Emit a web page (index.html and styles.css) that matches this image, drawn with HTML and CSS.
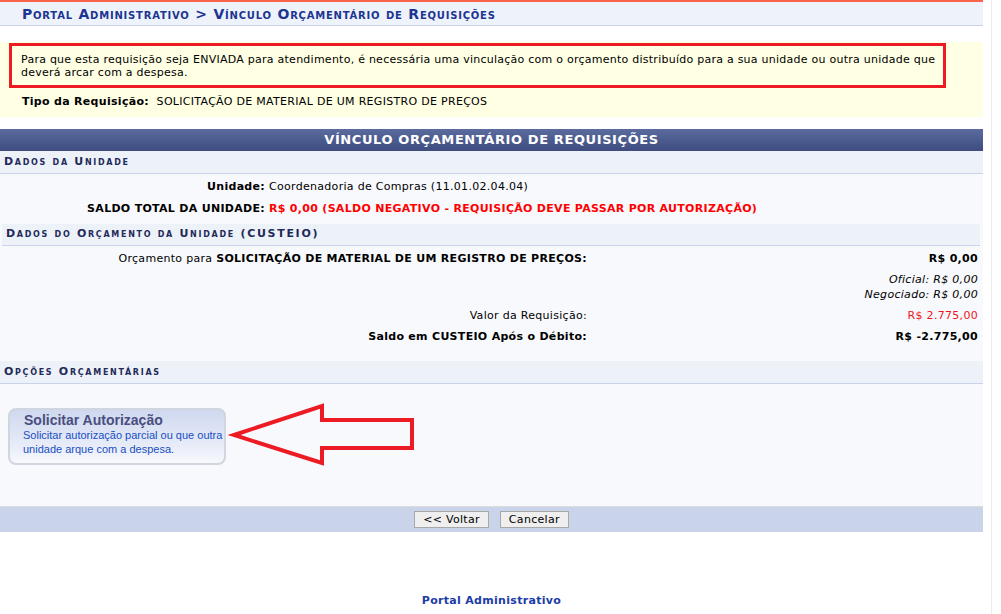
FILE: index.html
```html
<!DOCTYPE html>
<html lang="pt-BR">
<head>
    <meta charset="UTF-8">
    <title>Vínculo Orçamentário de Requisições</title>
    <link rel="stylesheet" href="styles.css">
</head>
<body>
    <div class="page">
        <div class="top-line"></div>
        <h2 class="breadcrumb">Portal Administrativo &gt; Vínculo Orçamentário de Requisições</h2>

        <div class="info-box">
            <div class="alert">
                Para que esta requisição seja ENVIADA para atendimento, é necessária uma vinculação com o orçamento distribuído para a sua unidade ou outra unidade que deverá arcar com a despesa.
            </div>
            <p class="tipo"><b>Tipo da Requisição:</b>&nbsp; SOLICITAÇÃO DE MATERIAL DE UM REGISTRO DE PREÇOS</p>
        </div>

        <div class="form">
            <div class="form-caption">Vínculo Orçamentário de Requisições</div>

            <div class="subheader">Dados da Unidade</div>
            <table class="fields unidade">
                <tr>
                    <th>Unidade:</th>
                    <td>Coordenadoria de Compras (11.01.02.04.04)</td>
                </tr>
                <tr class="last">
                    <th>SALDO TOTAL DA UNIDADE:</th>
                    <td class="negative">R$ 0,00 (SALDO NEGATIVO - REQUISIÇÃO DEVE PASSAR POR AUTORIZAÇÃO)</td>
                </tr>
            </table>

            <div class="inset">
                <div class="subheader">Dados do Orçamento da Unidade (CUSTEIO)</div>
                <table class="fields orcamento">
                    <tr class="first">
                        <td class="label">Orçamento para <b>SOLICITAÇÃO DE MATERIAL DE UM REGISTRO DE PREÇOS:</b></td>
                        <td class="value"><b>R$ 0,00</b></td>
                    </tr>
                    <tr>
                        <td class="label"></td>
                        <td class="value detail">Oficial: R$ 0,00<br>Negociado: R$ 0,00</td>
                    </tr>
                    <tr>
                        <td class="label">Valor da Requisição:</td>
                        <td class="value red">R$ 2.775,00</td>
                    </tr>
                    <tr class="last">
                        <td class="label"><b>Saldo em CUSTEIO Após o Débito:</b></td>
                        <td class="value"><b>R$ -2.775,00</b></td>
                    </tr>
                </table>
            </div>

            <div class="subheader">Opções Orçamentárias</div>
            <div class="options">
                <a class="option-card" href="#">
                    <span class="option-title">Solicitar Autorização</span>
                    <span class="option-desc">Solicitar autorização parcial ou que outra unidade arque com a despesa.</span>
                </a>
                <svg class="arrow" width="420" height="90" viewBox="0 0 420 90">
                    <polygon points="234,51 322,22 322,36 412,36 412,64 322,64 322,79" fill="none" stroke="#ed1c24" stroke-width="4" stroke-linejoin="miter"/>
                </svg>
            </div>

            <div class="form-footer">
                <button class="btn">&lt;&lt; Voltar</button>
                <button class="btn">Cancelar</button>
            </div>
        </div>

        <div class="site-footer">Portal Administrativo</div>
    </div>
    <div class="gutter"></div>
</body>
</html>
```

FILE: styles.css
```css
* {
    box-sizing: border-box;
    margin: 0;
    padding: 0;
}

body {
    font-family: 'DejaVu Sans', Verdana, sans-serif;
    font-size: 11px;
    letter-spacing: 0.3px;
    color: #000;
    background-color: #fff;
    display: flex;
    min-height: 100vh;
}

.page {
    width: 983px;
    flex-shrink: 0;
}

.gutter {
    flex: 1;
    border-left: 8px solid #fff;
    background-color: #fff;
    box-shadow: inset 1px 0 0 #ececec;
}

.top-line {
    height: 2px;
    background-color: #f7644a;
}

.breadcrumb {
    height: 24px;
    padding: 4px 0 0 22px;
    background-color: #eef2fa;
    border-bottom: 1px solid #c8d2e6;
    color: #1c3591;
    font-size: 14px;
    font-weight: bold;
    font-variant: small-caps;
    letter-spacing: 0.78px;
    line-height: 16px;
    white-space: nowrap;
}

.info-box {
    margin-top: 16px;
    height: 75px;
    background-color: #ffffe4;
    padding: 1px 0 0 9px;
}

.alert {
    width: 937px;
    height: 45px;
    border: 3px solid #ed1c24;
    padding: 7px 3px 0 9px;
    line-height: 13px;
    letter-spacing: 0.25px;
}

.tipo {
    margin-top: 7px;
    padding-left: 13px;
}

.form {
    margin-top: 12px;
    background-color: #f8f9fc;
}

.form-caption {
    height: 22px;
    line-height: 22px;
    text-align: center;
    color: #fff;
    font-size: 13px;
    font-weight: bold;
    text-transform: uppercase;
    letter-spacing: 0.6px;
    background: linear-gradient(#5b6b9d, #3e4c7f);
}

.subheader {
    height: 23px;
    line-height: 22px;
    padding-left: 4px;
    background-color: #edf1f8;
    border-bottom: 1px solid #c9d4ea;
    color: #1f2a5a;
    font-weight: bold;
    font-variant: small-caps;
    font-size: 11px;
    letter-spacing: 1.7px;
}

.fields {
    width: 100%;
    border-collapse: collapse;
}

.fields td,
.fields th {
    padding: 3px 0;
    line-height: 15px;
    vertical-align: top;
}

.unidade th {
    width: 269px;
    text-align: right;
    padding-right: 4px;
}

.unidade tr:first-child th,
.unidade tr:first-child td {
    padding-top: 5px;
}

.unidade tr.last th,
.unidade tr.last td {
    padding-top: 4px;
    padding-bottom: 8px;
}

.negative {
    color: #f00;
    font-weight: bold;
}

.inset {
    padding: 0 3px 0 2px;
}

.inset .subheader {
    height: 22px;
    line-height: 20px;
}

.orcamento .label {
    width: 585px;
    text-align: right;
}

.orcamento .value {
    text-align: right;
    padding-right: 2px;
}

.orcamento tr.first td {
    padding-top: 5px;
}

.orcamento tr.last td {
    padding-bottom: 17px;
}

.detail {
    font-style: italic;
}

.red {
    color: #f0141e;
}

.options {
    position: relative;
    height: 122px;
    padding: 24px 0 0 8px;
}

.option-card {
    display: flex;
    flex-direction: column;
    width: 218px;
    height: 57px;
    padding: 2px 0 0 13px;
    border: 2px solid #cfd6e0;
    border-radius: 8px;
    background: linear-gradient(#cfd8ef, #e8edf8 70%, #f8f9fd);
    text-decoration: none;
    font-family: 'Liberation Sans', Arial, sans-serif;
    letter-spacing: 0;
}

.option-title {
    color: #4a4e80;
    font-size: 14px;
    font-weight: bold;
    line-height: 16px;
    padding-left: 1px;
}

.option-desc {
    color: #1a4ec4;
    font-size: 11px;
    line-height: 14px;
}

.arrow {
    position: absolute;
    left: 0;
    top: 0;
}

.form-footer {
    height: 26px;
    border-top: 1px solid #dcdcdc;
    background-color: #c9d4ea;
    display: flex;
    justify-content: center;
    gap: 11px;
    padding-top: 4px;
}

.btn {
    height: 17px;
    padding: 0 8px;
    font-family: 'DejaVu Sans', Verdana, sans-serif;
    font-size: 11px;
    letter-spacing: 0.3px;
    white-space: nowrap;
    color: #000;
    background-color: #efefef;
    border: 1px solid #a8a8a8;
}

.site-footer {
    margin-top: 62px;
    text-align: center;
    color: #1c3ca6;
    font-weight: bold;
}
```
